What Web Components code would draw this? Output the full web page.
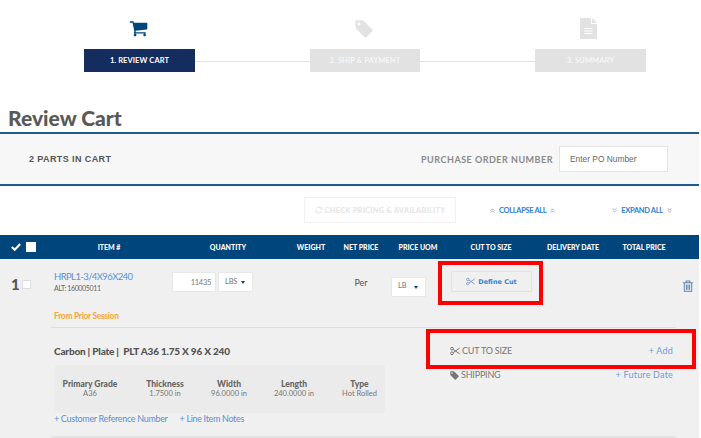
<!DOCTYPE html>
<html lang="en">
<head>
<meta charset="utf-8">
<title>Review Cart</title>
<style>
  html, body { margin: 0; background: #fff; overflow: hidden; }
  body { font-family: Lato, "Liberation Sans", sans-serif; width: 699px;
    --cols: 54px 110px 128px 38px 62px 52px 94px 70px 72px 19px;
    --navy: #00457c; --link: #5a90d6; }
</style>
</head>
<body>
<cart-stepper></cart-stepper>
<cart-title>Review Cart</cart-title>
<parts-bar></parts-bar>
<cart-toolbar></cart-toolbar>
<cart-header></cart-header>
<cart-row></cart-row>

<script>
const ICONS = {
  cart: `<svg viewBox="0 0 1664 1792" fill="currentColor"><path d="M640 1408q0 52-38 90t-90 38-90-38-38-90 38-90 90-38 90 38 38 90zm896 0q0 52-38 90t-90 38-90-38-38-90 38-90 90-38 90 38 38 90zm128-1088v512q0 24-16.5 42.5t-40.5 21.5l-1044 122q13 60 13 70 0 16-24 64h920q26 0 45 19t19 45-19 45-45 19h-1024q-26 0-45-19t-19-45q0-11 8-31.5t16-36 21.5-40 15.5-29.5l-177-823h-204q-26 0-45-19t-19-45 19-45 45-19h256q16 0 28.5 6.5t19.5 15.5 13 24.5 8 26 5.5 29.5 4.5 26h1201q26 0 45 19t19 45z"/></svg>`,
  tag: `<svg viewBox="0 100 1515 1600" fill="currentColor"><path d="M448 448q0-53-37.5-90.5t-90.5-37.5-90.5 37.5-37.5 90.5 37.5 90.5 90.5 37.5 90.5-37.5 37.5-90.5zm1067 576q0 53-37 90l-491 492q-39 37-91 37-53 0-90-37l-715-716q-38-37-64.5-101t-26.5-117v-416q0-52 38-90t90-38h416q53 0 117 26.5t102 64.5l715 714q37 39 37 91z"/></svg>`,
  file: `<svg viewBox="0 0 17 21"><path fill="currentColor" d="M0 0h11v6h6v15H0z"/><path fill="currentColor" d="M12 0l5 5h-5z"/><path stroke="#fff" stroke-width="1.2" d="M4.500 10.500h8M4.500 13h8M4.500 15.500h8"/></svg>`,
  scissors: `<svg viewBox="0 0 14 12" fill="none" stroke="currentColor" stroke-width="1.400"><circle cx="2.800" cy="2.800" r="1.900"/><circle cx="2.800" cy="9.200" r="1.900"/><path d="M4.500 3.800L13.500 10M4.500 8.200L13.500 2"/></svg>`,
  trash: `<svg viewBox="0 0 12 13" fill="none" stroke="currentColor" stroke-width="1.100"><path d="M.5 3h11M4 3V1h4v2M2 3v9.300h8V3M4.300 5v5.500M6 5v5.500M7.700 5v5.500"/></svg>`,
  check: `<svg viewBox="0 0 12 10" fill="none" stroke="currentColor" stroke-width="2.600"><path d="M1 5l3.500 3.300L11 1.500"/></svg>`,
  refresh: `<svg viewBox="0 0 10 10" fill="none" stroke="currentColor" stroke-width="1.500"><path d="M8.500 3.500A4 4 0 0 0 1.500 3.500M1.500 6.500A4 4 0 0 0 8.500 6.500"/><path fill="currentColor" stroke="none" d="M9.500 .8v3.600H6zM.5 9.200V5.600H4z"/></svg>`,
  up: `<svg viewBox="0 0 6 6" fill="none" stroke="currentColor" stroke-width="1"><path d="M1 3l2-2 2 2M1 5.500l2-2 2 2"/></svg>`,
  down: `<svg viewBox="0 0 6 6" fill="none" stroke="currentColor" stroke-width="1"><path d="M1 .5l2 2 2-2M1 3l2 2 2-2"/></svg>`
};

class CartIcon extends HTMLElement {
  connectedCallback() {
    const size = this.getAttribute("size") || 10;
    this.attachShadow({ mode: "open" }).innerHTML = `
      <style>
        :host { display: inline-flex; width: ${size}px; height: ${size}px; flex: none; }
        svg { width: 100%; height: 100%; display: block; }
      </style>
      ${ICONS[this.getAttribute("name")]}`;
  }
}
customElements.define("cart-icon", CartIcon);

class CartStepper extends HTMLElement {
  constructor() {
    super();
    this.attachShadow({ mode: "open" }).innerHTML = `
      <style>
        :host { display: flex; height: 85px; padding: 20px 0 0 84px; box-sizing: border-box; }
        .step { width: 111px; display: flex; flex-direction: column; align-items: center; flex: none; }
        .step.mid { width: 110px; }
        .ico { height: 29px; color: #e2e2e2; margin-left: -3px; }
        .ico.file { margin: -2px 0 2px -4px; }
        .active .ico { color: #00457c; }
        .box { width: 100%; height: 23px; background: #e2e2e2; color: #f6f6f6; display: flex;
          align-items: center; justify-content: center;
          font: 700 7.500px Lato, sans-serif; letter-spacing: .1px; }
        .active .box { background: #152c5f; color: #fff; }
        .line { width: 115px; height: 1px; background: #e2e2e2; margin-top: 41px; flex: none; }
      </style>
      <div class="step active"><div class="ico"><cart-icon name="cart" size="19"></cart-icon></div><div class="box">1. REVIEW CART</div></div>
      <div class="line"></div>
      <div class="step mid"><div class="ico"><cart-icon name="tag" size="18"></cart-icon></div><div class="box">2. SHIP &amp; PAYMENT</div></div>
      <div class="line"></div>
      <div class="step"><div class="ico file"><cart-icon name="file" size="21"></cart-icon></div><div class="box">3. SUMMARY</div></div>`;
  }
}
customElements.define("cart-stepper", CartStepper);

class CartTitle extends HTMLElement {
  constructor() {
    super();
    this.attachShadow({ mode: "open" }).innerHTML = `
      <style>
        :host { display: block; height: 49px; box-sizing: border-box; padding: 21px 0 0 8px;
          font: 900 21px/24px Lato, sans-serif; color: #595959; border-bottom: 2px solid #1f5a8a; }
      </style>
      <slot></slot>`;
  }
}
customElements.define("cart-title", CartTitle);

class PartsBar extends HTMLElement {
  constructor() {
    super();
    this.attachShadow({ mode: "open" }).innerHTML = `
      <style>
        :host { display: flex; align-items: center; height: 52px; box-sizing: border-box;
          background: #f7f7f7; border-bottom: 2px solid #1f5a8a; padding: 0 31px 0 29px; }
        .count { font: 700 9px "Liberation Sans", sans-serif; letter-spacing: .4px; color: #555; flex: 1; }
        .po { font: 700 9px Lato, sans-serif; letter-spacing: .5px; color: #8a8a8a; margin-right: 6px; }
        .input { width: 109px; height: 26px; box-sizing: border-box; background: #fff; border: 1px solid #e4e4e4;
          padding-left: 10px; display: flex; align-items: center; font: 8.400px "Liberation Sans", sans-serif; color: #666; }
      </style>
      <span class="count">2 PARTS IN CART</span>
      <span class="po">PURCHASE ORDER NUMBER</span>
      <div class="input">Enter PO Number</div>`;
  }
}
customElements.define("parts-bar", PartsBar);

class CartToolbar extends HTMLElement {
  constructor() {
    super();
    this.attachShadow({ mode: "open" }).innerHTML = `
      <style>
        :host { display: flex; align-items: center; height: 49px; padding: 0 0 0 304px; box-sizing: border-box; }
        .check { width: 152px; height: 26px; box-sizing: border-box; border: 1px solid #f0f0f0; display: flex;
          align-items: center; justify-content: center; gap: 2px; color: #e6e6e6;
          font: 900 7.500px Lato, sans-serif; letter-spacing: .2px; margin-top: -1px; }
        .act { display: flex; align-items: center; gap: 4px; color: #2f7fd0; font: 700 7.500px Lato, sans-serif; letter-spacing: -.35px; }
        .act cart-icon { color: #8aa0b8; }
        .collapse { margin-left: 34px; }
        .expand { margin-left: 57px; }
      </style>
      <div class="check"><cart-icon name="refresh" size="8"></cart-icon>CHECK PRICING &amp; AVAILABILITY</div>
      <div class="act collapse"><cart-icon name="up" size="5"></cart-icon>COLLAPSE ALL<cart-icon name="up" size="5"></cart-icon></div>
      <div class="act expand"><cart-icon name="down" size="5"></cart-icon>EXPAND ALL<cart-icon name="down" size="5"></cart-icon></div>`;
  }
}
customElements.define("cart-toolbar", CartToolbar);

class CartHeader extends HTMLElement {
  constructor() {
    super();
    const labels = ["ITEM #", "QUANTITY", "WEIGHT", "NET PRICE", "PRICE UOM", "CUT TO SIZE", "DELIVERY DATE", "TOTAL PRICE"];
    this.attachShadow({ mode: "open" }).innerHTML = `
      <style>
        :host { display: grid; grid-template-columns: var(--cols); height: 24px; align-items: center;
          background: var(--navy); color: #fff; font: 900 7px Lato, sans-serif; text-align: center; }
        .all { display: flex; align-items: center; gap: 5px; padding-left: 11px; }
        .box { width: 10px; height: 10px; background: #fff; }
      </style>
      <div class="all"><cart-icon name="check" size="10"></cart-icon><div class="box"></div></div>
      ${labels.map((label) => `<div>${label}</div>`).join("")}`;
  }
}
customElements.define("cart-header", CartHeader);

class CartSelect extends HTMLElement {
  constructor() {
    super();
    this.attachShadow({ mode: "open" }).innerHTML = `
      <style>
        :host { display: inline-flex; align-items: center; justify-content: space-between; box-sizing: border-box;
          width: 35px; height: 20px; background: #fff; border: 1px solid #e8e8e8; padding: 0 7px 2px 6px;
          font: 7.500px Lato, sans-serif; color: #777; letter-spacing: -.2px; }
        i { width: 0; height: 0; border: 2.500px solid transparent; border-top: 3px solid #00457c; border-bottom: 0; margin-top: 3px; }
      </style>
      <slot></slot><i></i>`;
  }
}
customElements.define("cart-select", CartSelect);

class SpecTable extends HTMLElement {
  constructor() {
    super();
    const specs = [
      ["Primary Grade", "A36", 72], ["Thickness", "1.7500 in", 78], ["Width", "96.0000 in", 50],
      ["Length", "240.0000 in", 80], ["Type", "Hot Rolled", 51]
    ];
    this.attachShadow({ mode: "open" }).innerHTML = `
      <style>
        :host { display: flex; width: 331px; height: 48px; align-items: center; background: #ebebeb; text-align: center; }
        b { display: block; font: 900 8.500px/10px Lato, sans-serif; color: #666; }
        span { display: block; font: 7.500px/10px Lato, sans-serif; color: #777; white-space: nowrap; }
      </style>
      ${specs.map(([k, v, w]) => `<div style="width:${w}px;flex:none"><b>${k}</b><span>${v}</span></div>`).join("")}`;
  }
}
customElements.define("spec-table", SpecTable);

class CartRow extends HTMLElement {
  constructor() {
    super();
    this.attachShadow({ mode: "open" }).innerHTML = `
      <style>
        :host { display: block; position: relative; background: #f0f0f0; height: 179px; overflow: hidden; }
        .top { display: grid; grid-template-columns: var(--cols); padding-top: 13px; height: 21px; align-items: start; }
        .num { display: flex; align-items: center; gap: 4px; padding: 5px 0 0 11px; font: 900 15px/14px Lato, sans-serif; color: #555; }
        .num span { width: 7px; }
        .box { width: 9px; height: 9px; background: #fff; border: 1px solid #ddd; box-sizing: border-box; }
        .item { margin-top: -1px; font: 9.500px/12px Lato, sans-serif; letter-spacing: -.6px; color: var(--link); white-space: nowrap; }
        .item small { display: block; font: 7px/10px Lato, sans-serif; letter-spacing: -.35px; color: #666; }
        .qty { display: flex; gap: 2px; padding-left: 8px; }
        .in { width: 44px; height: 20px; box-sizing: border-box; background: #fff; border: 1px solid #e8e8e8;
          display: flex; align-items: center; justify-content: flex-end; padding-right: 4px; font: 7.500px Lato, sans-serif; letter-spacing: -.3px; color: #777; }
        .per { text-align: center; font: 9px/22px Lato, sans-serif; color: #555; }
        .uom { margin-left: -1px; }
        .define { margin: -1px 0 0 7px; width: 81px; height: 21px; box-sizing: border-box; border: 1px solid #e2e2e2;
          display: flex; align-items: center; justify-content: center; gap: 3px; color: #3d7fd0;
          font: 700 6.500px "DejaVu Sans", sans-serif; }
        .define cart-icon { color: #7a9cc8; }
        .trash { color: #5f86aa; padding: 4px 0 0 2px; }
        .prior { margin: 17px 0 0 54px; font: 700 8.500px/12px Lato, sans-serif; letter-spacing: -.33px; color: #f5a63a; }
        .details { display: flex; justify-content: space-between; margin: 5px 23px 0 51px; height: 108px;
          box-sizing: content-box; border-top: 1px solid #ddd; border-bottom: 2px solid #e4e4e4; padding-left: 3px; }
        h3 { margin: 16px 0 7px; font: 900 10px/14px Lato, sans-serif; letter-spacing: -.2px; color: #555; }
        .links { display: flex; gap: 12px; font: 9px/11px Lato, sans-serif; letter-spacing: -.33px; color: var(--link); }
        .side { width: 223px; margin-right: 3px; padding-top: 16px; font: 9px/14px Lato, sans-serif; color: #777; }
        .line { display: flex; justify-content: space-between; align-items: center; height: 14px; margin-bottom: 10px; letter-spacing: -.2px; }
        .line > span { display: flex; align-items: center; gap: 2px; }
        .line a { color: #6e9bdc; letter-spacing: .2px; }
        .mark { position: absolute; box-sizing: border-box; border: 4px solid #f00; }
      </style>
      <div class="top">
        <div class="num"><span>1</span><div class="box"></div></div>
        <div class="item">HRPL1-3/4X96X240<small>ALT: 160005011</small></div>
        <div class="qty"><div class="in">11435</div><cart-select>LBS</cart-select></div>
        <div></div>
        <div class="per">Per</div>
        <div class="uom"><cart-select>LB</cart-select></div>
        <div class="define"><cart-icon name="scissors" size="9"></cart-icon>Define Cut</div>
        <div></div><div></div>
        <div class="trash"><cart-icon name="trash" size="12"></cart-icon></div>
      </div>
      <div class="prior">From Prior Session</div>
      <div class="details">
        <div>
          <h3>Carbon | Plate | &nbsp;PLT A36 1.75 X 96 X 240</h3>
          <spec-table></spec-table>
          <div class="links"><span>+ Customer Reference Number</span><span>+ Line Item Notes</span></div>
        </div>
        <div class="side">
          <div class="line"><span><cart-icon name="scissors" size="10"></cart-icon>CUT TO SIZE</span><a>+ Add</a></div>
          <div class="line"><span><cart-icon name="tag" size="9"></cart-icon>SHIPPING</span><a>+ Future Date</a></div>
        </div>
      </div>
      <div class="mark" style="left:438px;top:2px;width:105px;height:44px"></div>
      <div class="mark" style="left:426px;top:70px;width:270px;height:40px"></div>`;
  }
}
customElements.define("cart-row", CartRow);
</script>
</body>
</html>
